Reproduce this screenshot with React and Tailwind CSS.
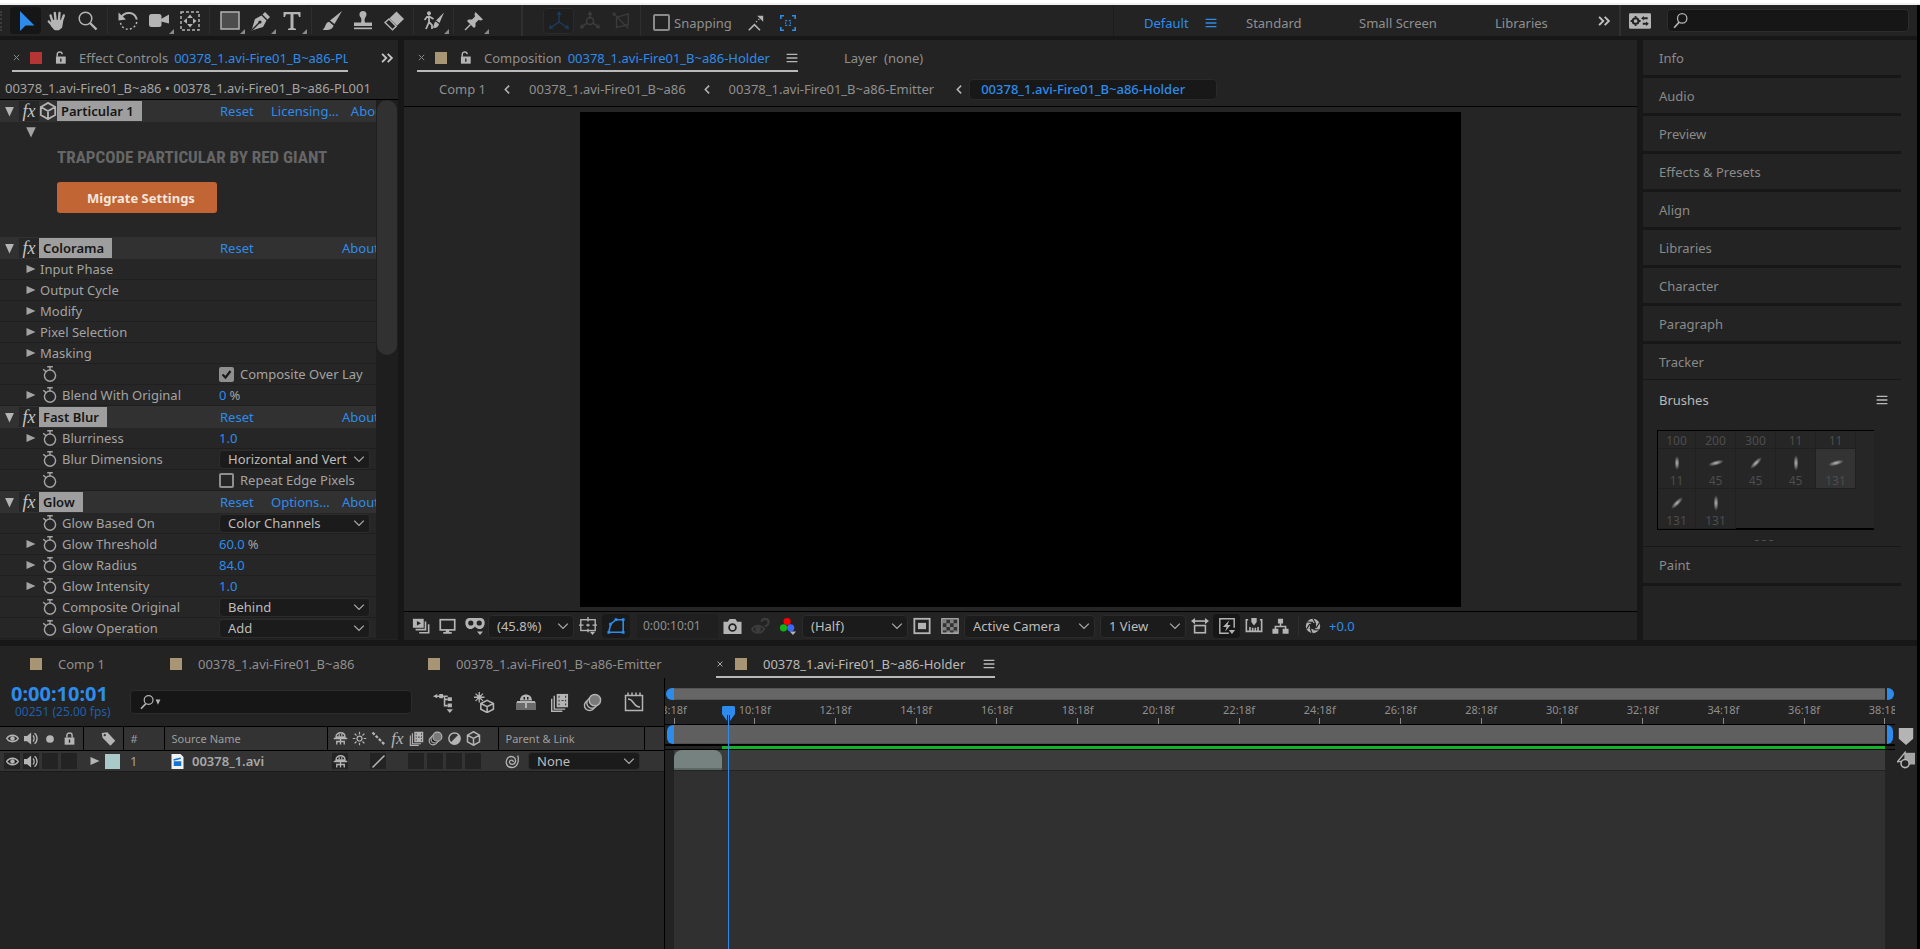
import { useState } from 'react'
import clsx from 'clsx'

// ===== ICONS (all drawn on a 20x20 grid) =====

function Svg({ size = 20, className, children }) {
    return (
        <svg width={size} height={size} viewBox="0 0 20 20" fill="currentColor" className={clsx('shrink-0', className)} aria-hidden="true">
            {children}
        </svg>
    )
}

const line = { fill: 'none', stroke: 'currentColor', strokeWidth: 1.5 }

const icons = {
    select: <path d="M4 0 L4 20 L9.5 14.5 L18.500 14.5 Z" />,
    hand: (
        <g fill="none" stroke="currentColor" strokeLinecap="round" strokeWidth="2.400">
            <path d="M5.200 10 L3.600 4.500 M8.500 8.500 L7.800 2 M12 8.500 L12.500 2 M15 9.500 L16.800 4.500 M5.500 14.500 L1.800 10.500" />
            <path d="M5.500 10 H15 L14 16 L11.500 18 H8 L5 14.500 Z" fill="currentColor" strokeLinejoin="round" />
        </g>
    ),
    zoom: (
        <g {...line}>
            <circle cx="7.500" cy="7.500" r="6.300" />
            <path d="M12 12 L18.500 18.500" strokeWidth="2.400" />
        </g>
    ),
    rotate: (
        <g {...line}>
            <path d="M3.500 6 C7 0 17 0.500 18.800 8.500" strokeWidth="2" />
            <path d="M18.800 11 C17 20 4 21 2.500 11.500" strokeDasharray="2 2.200" />
            <path d="M0.500 1.500 V9.500 L8 8.500 Z" fill="currentColor" stroke="none" />
        </g>
    ),
    camera: (
        <g>
            <rect x="0" y="3" width="12.500" height="13" rx="2.500" />
            <path d="M12 8 L20 3.500 V12.500 L12 10.500 Z" />
        </g>
    ),
    panBehind: (
        <g>
            <rect x="1" y="1" width="18" height="18" {...line} strokeDasharray="3 2" />
            <path d="M10 3.500 L12.800 7 H7.200 Z M10 16.500 L12.800 13 H7.200 Z M3.500 10 L7 7.200 V12.800 Z M16.500 10 L13 7.200 V12.800 Z" />
        </g>
    ),
    rect: <rect x="1" y="1" width="18" height="17" fill="#4d4d4d" stroke="currentColor" strokeWidth="1.500" />,
    pen: (
        <g>
            <path d="M0.500 19.500 L4 8 L10.500 4.500 L15.500 9.500 L12 16 Z" />
            <path d="M11.500 3.500 L14 1 L19 6 L16.500 8.500 Z" />
            <path d="M1 19 L8.500 11.500" stroke="#232323" strokeWidth="1.300" />
            <circle cx="9" cy="11" r="1.600" fill="#232323" />
        </g>
    ),
    type: <path d="M1.500 1 H18.500 V6 H17 L16 3.200 H11.500 V17 L14 17.800 V19 H6 V17.800 L8.500 17 V3.200 H4 L3 6 H1.500 Z" />,
    brush: (
        <g>
            <path d="M20 0 L12.500 13 L8 9.500 Z" />
            <path d="M7 10.800 L11.500 14.500 C11 18.500 5 20 0.500 18.500 C4 17 3 11.500 7 10.800 Z" />
        </g>
    ),
    stamp: (
        <g>
            <path d="M10 0 C14 0 14.500 4 12 7 C11.300 8.500 11.600 10 12 11.500 H19 V15 H1 V11.500 H8 C8.400 10 8.700 8.500 8 7 C5.500 4 6 0 10 0 Z" />
            <rect x="1" y="16.500" width="18" height="1.700" />
        </g>
    ),
    eraser: (
        <g>
            <path d="M12.500 0.500 L20 8 L13 14.800 L5.500 7.300 Z" />
            <path d="M5 8 L12.200 15.200 L8.500 18.800 L1 11.500 Z" {...line} />
        </g>
    ),
    roto: (
        <g>
            <circle cx="5" cy="2.300" r="2" />
            <path d="M5 4.500 V11 L2 18 M5 11 L8 14 V18 M0.500 9 L3 6 H6 L9.500 8" {...line} strokeWidth="1.800" />
            <path d="M20 1.500 L15.500 12 L12 9.500 Z" />
            <path d="M11.500 10.500 L15 13 C14.500 17 10.500 17.500 8.500 16.500 C10.500 15 9.500 12 11.500 10.500 Z" />
        </g>
    ),
    pin: (
        <g>
            <path d="M11.500 1 L19 8.500 L17 9.500 L14.500 9 L11.500 12 L11.500 15.500 L10 17 L3 10 L4.500 8.500 H8 L11 5.500 L10.500 3 Z" />
            <path d="M6.500 13.500 L1 19" {...line} />
        </g>
    ),
    axisLocal: (
        <g {...line}>
            <path d="M10 1 V11 L1 17 M10 11 L19 17" />
            <path d="M10 0 L12.500 4 H7.500 Z M0 18 L1 13.500 L4.500 17.500 Z M20 18 L19 13.500 L15.500 17.500 Z" fill="currentColor" stroke="none" />
        </g>
    ),
    axisWorld: (
        <g {...line}>
            <circle cx="10" cy="10" r="3.500" />
            <path d="M10 1 V8 M7.500 12 L1 16 M12.500 12 L19 16" />
            <path d="M10 0 L12.500 4 H7.500 Z M0 17.500 L1 13 L4.500 17 Z M20 17.500 L19 13 L15.500 17 Z" fill="currentColor" stroke="none" />
        </g>
    ),
    axisView: (
        <g {...line}>
            <path d="M5 6 L18 2 V14 L5 17 Z M2 2 L18 18" />
            <path d="M0.500 0.500 L5 1 L1 5 Z" fill="currentColor" stroke="none" />
        </g>
    ),
    snapEdge: (
        <g {...line}>
            <path d="M1 19 L8 12 L15 19" strokeWidth="2" />
            <path d="M10 9 L15 4" strokeDasharray="2 2" />
            <path d="M11.500 1 H19 V8.500 Z" fill="currentColor" stroke="none" />
        </g>
    ),
    snapBox: (
        <g {...line} strokeWidth="2">
            <path d="M1 5 V1 H5 M15 1 H19 V5 M19 15 V19 H15 M5 19 H1 V15" />
            <path d="M6.500 7 H9 M11 7 H13.500 M6.500 13 H9 M11 13 H13.500 M7 9 V11 M13 9 V11" strokeWidth="1.500" />
        </g>
    ),
    chevrons: <path d="M3 4 L9 10 L3 16 M11 4 L17 10 L11 16" {...line} strokeWidth="2.600" />,
    search: (
        <g {...line}>
            <circle cx="12" cy="7.500" r="5.500" />
            <path d="M8.500 12 L2.500 18.500" strokeWidth="2" />
        </g>
    ),
    menu: <path d="M1 4 H19 M1 10 H19 M1 16 H19" {...line} strokeWidth="2.400" />,
    lockOpen: (
        <g>
            <path d="M5 9 V5 C5 0.500 12.500 0.500 12.500 5" {...line} strokeWidth="2.200" />
            <rect x="3" y="8.500" width="15" height="11" />
            <path d="M9.500 11.500 H11.500 V16.500 H9.500 Z" fill="#232323" />
        </g>
    ),
    lock: (
        <g>
            <path d="M6 9 V5 C6 0.500 14 0.500 14 5 V9" {...line} strokeWidth="2.200" />
            <rect x="2.500" y="8.500" width="15" height="11" />
            <path d="M9 11.500 H11 V16.500 H9 Z" fill="#232323" />
        </g>
    ),
    cube: <path d="M10 1 L18 5.500 V14.500 L10 19 L2 14.500 V5.500 Z M2 5.500 L10 10 L18 5.500 M10 10 V19" {...line} strokeWidth="2" />,
    stopwatch: (
        <g {...line} strokeWidth="1.800">
            <circle cx="10" cy="12" r="7" />
            <path d="M6.500 1 H13.500 M10 1 V5 M1.500 4 L5 7" />
        </g>
    ),
    chevronDown: <path d="M2 6 L10 14 L18 6" {...line} strokeWidth="2.200" />,
    chevronLeft: <path d="M13 3 L6 10 L13 17" {...line} strokeWidth="2.800" />,
    close: <path d="M4 4 L16 16 M16 4 L4 16" {...line} strokeWidth="2.200" />,
    down: <path d="M2 2 H18 L10 19 Z" />,
    right: <path d="M1 2 L19 10 L1 18 Z" />,
    preview: (
        <g>
            <rect x="1" y="2" width="12" height="10" />
            <path d="M5.500 4.500 L10 7 L5.500 9.500 Z" fill="#232323" />
            <path d="M15 5 V14 H4 M18.500 8 V17.500 H8" {...line} strokeWidth="1.800" />
        </g>
    ),
    monitor: (
        <g>
            <rect x="1.500" y="2" width="17" height="12" {...line} strokeWidth="2" />
            <path d="M8 14 H12 V16.500 H15 V18.500 H5 V16.500 H8 Z" />
        </g>
    ),
    goggles: (
        <g>
            <path d="M4 2 H16 C19.500 2 20.500 6.500 19 10 C17 14.500 12 13.500 10 10.500 C8 13.500 3 14.500 1 10 C-0.500 6.500 0.500 2 4 2 Z" />
            <circle cx="5.800" cy="7" r="2.600" fill="#232323" />
            <circle cx="14.200" cy="7" r="2.600" fill="#232323" />
            <path d="M12 15.500 H18 L15 19 Z" />
        </g>
    ),
    region: (
        <g>
            <rect x="2" y="3" width="16" height="12" {...line} />
            <path d="M10 0 V5 M10 7.500 V10.500 M10 13 V17 M0 9 H5 M8 9 H12 M15 9 H20" {...line} />
            <path d="M12 16.500 H18 L15 20 Z" />
        </g>
    ),
    mask: (
        <g {...line}>
            <path d="M2 17 L4 8 L10 3 H18 V17 Z" strokeWidth="1.800" />
            <path d="M0.500 15.500 H3.500 V18.500 H0.500 Z M16.500 15.500 H19.500 V18.500 H16.500 Z M16.500 1.500 H19.500 V4.500 H16.500 Z M8.500 1.500 H11.500 V4.500 H8.500 Z M2.500 6.500 H5.500 V9.500 H2.500 Z" fill="currentColor" stroke="none" />
        </g>
    ),
    photo: (
        <g>
            <path d="M0.500 5 H5 L7 2 H13 L15 5 H19.500 V18 H0.500 Z" />
            <circle cx="10" cy="11" r="3.600" fill="none" stroke="#232323" strokeWidth="1.800" />
        </g>
    ),
    ghost: (
        <g {...line}>
            <path d="M1 13 C4 8 11 8 14 13 C11 18 4 18 1 13 Z" strokeWidth="2" />
            <circle cx="7.500" cy="13" r="2.200" fill="currentColor" />
            <path d="M11 5 C12 1 18 1 18.500 5 C18.500 9 16 10 14.500 9" strokeWidth="2.400" />
        </g>
    ),
    rgb: (
        <g>
            <circle cx="9" cy="5" r="4" fill="#f00" />
            <circle cx="5" cy="12" r="4" fill="#12b312" />
            <circle cx="13" cy="12" r="4" fill="#3a66ff" />
            <path d="M12 16 H19 L15.500 20 Z" />
        </g>
    ),
    safeArea: (
        <g>
            <rect x="1.500" y="2" width="17" height="16" {...line} strokeWidth="2" />
            <rect x="5.500" y="6.500" width="9" height="7" />
        </g>
    ),
    checker: (
        <g>
            <rect x="1" y="2" width="18" height="16" fill="#333" stroke="currentColor" strokeWidth="1.500" />
            <path d="M2 3 H6 V7 H2 Z M10 3 H14 V7 H10 Z M6 7 H10 V11 H6 Z M14 7 H18 V11 H14 Z M2 11 H6 V15 H2 Z M10 11 H14 V15 H10 Z M6 15 H10 V18 H6 Z M14 15 H18 V18 H14 Z" opacity="0.6" />
        </g>
    ),
    pixelAspect: (
        <g {...line} strokeWidth="1.800">
            <rect x="4" y="9.500" width="12" height="8" />
            <path d="M2 4.500 H18" />
            <path d="M0 4.500 L4.500 1 V8 Z M20 4.500 L15.500 1 V8 Z" fill="currentColor" stroke="none" />
        </g>
    ),
    fastPreview: (
        <g>
            <path d="M12 18 H2 V2 H18 V12" {...line} strokeWidth="1.600" />
            <path d="M12.500 3.500 L5.500 11 H9.500 L8 16 L14 9 H10.500 Z" />
            <path d="M12 14.500 H19 L15.500 19 Z" />
        </g>
    ),
    ruler: (
        <g {...line} strokeWidth="1.800">
            <path d="M3.500 3 H1.500 V16 H18.500 V3 H16.500 M5.500 11 V16 M8.500 12 V16 M11.500 12 V16 M14.500 11 V16" />
            <path d="M7 1 H13 V5.500 L10 9.500 L7 5.500 Z" fill="currentColor" stroke="none" />
        </g>
    ),
    flow: (
        <g>
            <path d="M7 1 H13 V6.500 H7 Z M0.500 12.500 H7.500 V18.500 H0.500 Z M12.500 12.500 H19.500 V18.500 H12.500 Z" />
            <path d="M10 6 V10 M4 13 V10 H16 V13" {...line} strokeWidth="1.800" />
        </g>
    ),
    aperture: (
        <g>
            <circle cx="10" cy="10" r="6.500" fill="none" stroke="currentColor" strokeWidth="5" />
            <path d="M10 1 L13.500 7.500 M18 6 L14 12.500 M18 15 L10.500 14.500 M9 19 L6.200 12.500 M2 14 L6 7.500 M2.500 5 L10 5.500" stroke="#232323" strokeWidth="1.500" />
        </g>
    ),
    workspace: (
        <g>
            <rect x="0" y="3" width="20" height="14" rx="1" />
            <circle cx="6" cy="10" r="2.600" fill="none" stroke="#232323" strokeWidth="1.800" />
            <path d="M6 5.500 V7 M6 13 V14.500 M1.500 10 H3 M9 10 H10.500 M13 7.500 H17 M12.500 12.500 H16" stroke="#232323" strokeWidth="1.600" />
            <path d="M13.500 5.500 V9.500 L11 7.500 Z M15.500 10.500 V14.500 L18 12.500 Z" fill="#232323" />
        </g>
    ),
    miniFlow: (
        <g>
            <path d="M0 4 L4 2 V6 Z M6 2 H9.500 V6 H6 Z M14 5 H18 V8.500 H14 Z M14 11 H18 V14.500 H14 Z M13 16.500 H19 L16 20 Z" />
            <path d="M3 4 H14 M11 4 V13 H14 M11 7 H14" {...line} />
        </g>
    ),
    draft3d: (
        <g>
            <path d="M12.500 8 L18.500 11 V16.500 L12.500 19.500 L6.500 16.500 V11 Z M6.500 11 L12.500 14 L18.500 11 M12.500 14 V19.500" {...line} />
            <path d="M5 0 V10 M0 5 H10 M1.500 1.500 L8.500 8.500 M8.500 1.500 L1.500 8.500" {...line} strokeWidth="1.200" />
            <circle cx="5" cy="5" r="2.200" />
        </g>
    ),
    shyAll: (
        <g>
            <rect x="0" y="10" width="20" height="8" opacity="0.5" />
            <path d="M4 8.500 C4 0.500 16 0.500 16 8.500 Z M1 9 H19 V11 H1 Z M9 9 H11 V16 H9 Z" />
            <path d="M7.500 5 H9 V7.500 H7.500 Z M11 5 H12.500 V7.500 H11 Z" fill="#232323" />
        </g>
    ),
    shy: (
        <g>
            <path d="M4 8 C4 0.500 16 0.500 16 8 Z M1 10 H19 M10 9 V18 M5 18 V14 H15 V18" {...line} strokeWidth="1.800" />
            <path d="M7.500 4 H9 V7 H7.500 Z M11 4 H12.500 V7 H11 Z" />
        </g>
    ),
    film: (
        <g>
            <path d="M7 1 H19 V15 H7 Z" />
            <path d="M9 3 H10 V5 H9 Z M9 7 H10 V9 H9 Z M9 11 H10 V13 H9 Z M16 3 H17 V5 H16 Z M16 7 H17 V9 H16 Z M16 11 H17 V13 H16 Z M12 7.500 H14.500 V8.500 H12 Z" fill="#232323" />
            <path d="M4.500 3 V17 H16 M1.800 6 V19.200 H13" {...line} />
        </g>
    ),
    motionBlur: (
        <g {...line}>
            <circle cx="7" cy="13" r="5.500" />
            <circle cx="9.500" cy="10.500" r="5.500" fill="#232323" />
            <circle cx="12.500" cy="7.500" r="6" fill="#7a7a7a" />
        </g>
    ),
    graph: (
        <g {...line}>
            <path d="M1.500 3.500 H18.500 V18.500 H1.500 Z M4 7 C10 7 9 15 16 15" />
            <path d="M4 0.500 V3 M8 0.500 V3 M12 0.500 V3 M16 0.500 V3" />
        </g>
    ),
    eye: (
        <g>
            <path d="M1 10 C5 3.500 15 3.500 19 10 C15 16.500 5 16.500 1 10 Z" {...line} strokeWidth="2.200" />
            <circle cx="10" cy="10" r="3.400" />
        </g>
    ),
    speaker: (
        <g>
            <path d="M0 6.500 H4 L9.500 2 V18 L4 13.500 H0 Z" />
            <path d="M12 6 C14 8 14 12 12 14 M14 3 C18.500 6 18.500 14 14 17" {...line} strokeWidth="1.800" />
        </g>
    ),
    dot: <circle cx="10" cy="10" r="5.500" />,
    tag: (
        <g>
            <path d="M1 2.500 L8.500 1.500 L19 13 L12.500 19.500 L2 9 Z" />
            <circle cx="5" cy="5.500" r="1.500" fill="#333" />
        </g>
    ),
    sun: (
        <g {...line} strokeWidth="1.600">
            <circle cx="10" cy="10" r="3.300" />
            <path d="M10 1 V4.500 M10 15.500 V19 M1 10 H4.500 M15.500 10 H19 M3.500 3.500 L6 6 M14 14 L16.500 16.500 M16.500 3.500 L14 6 M6 14 L3.500 16.500" />
        </g>
    ),
    quality: <path d="M2 2 L18 18" {...line} strokeWidth="3" strokeDasharray="4 2" />,
    slash: <path d="M2 18 L18 2" {...line} strokeWidth="2" />,
    adjustment: (
        <g>
            <circle cx="10" cy="10" r="7.500" {...line} strokeWidth="2" />
            <path d="M15.500 4.500 A7.500 7.500 0 0 1 4.500 15.500 Z" />
        </g>
    ),
    spiral: <path d="M17 2 C19 9 17 18 9 18 C1 18 0 9 4 5 C8 1.500 15 4 14 10 C13 15 6 15 6 10.500 C6 7.500 11 7 11 10.500" {...line} strokeWidth="1.700" />,
    clip: (
        <g>
            <path d="M2 0 H14 L18 4 V20 H2 Z" fill="#f2f2f2" />
            <path d="M5 9.500 H15 V16 H5 Z M4.500 7 L14 4.500 L14.500 6.500 L5 9 Z" fill="#1473d6" />
        </g>
    ),
    shield: <path d="M2 1 H18 V13 L10 20 L2 13 Z" />,
    compButton: (
        <g>
            <path d="M9 2 H20 V15 H9 Z" opacity="0.9" />
            <path d="M0.500 12 L9 1.500 L9 11 Z" fill="#232323" stroke="currentColor" strokeWidth="1.500" />
            <circle cx="9" cy="14" r="4.500" fill="#232323" stroke="currentColor" strokeWidth="1.800" />
        </g>
    ),
}

function Icon({ name, size, className }) {
    return (
        <Svg size={size} className={className}>
            {icons[name]}
        </Svg>
    )
}

// ===== SHARED PARTS =====

function Dropdown({ label, options, className }) {
    return (
        <div className={clsx('relative flex shrink-0 items-center rounded-sm border border-[#2c2c2c] bg-[#1b1b1b]', className)}>
            <select aria-label={label} className="h-full w-full appearance-none bg-transparent pr-5 pl-2 text-[13px] leading-4 text-[#bdbdbd] outline-none">
                {options.map((o) => (
                    <option key={o}>{o}</option>
                ))}
            </select>
            <Icon name="chevronDown" size={12} className="pointer-events-none absolute right-1 text-[#a8a8a8]" />
        </div>
    )
}

function Swatch({ className }) {
    return <span className={clsx('h-3 w-3 shrink-0', className)} />
}

// ===== TOOLBAR =====

const toolGroups = [
    [
        { name: 'select', label: 'Selection Tool', active: true },
        { name: 'hand', label: 'Hand Tool' },
        { name: 'zoom', label: 'Zoom Tool' },
    ],
    [
        { name: 'rotate', label: 'Rotation Tool' },
        { name: 'camera', label: 'Camera Tool', more: true },
        { name: 'panBehind', label: 'Pan Behind Tool' },
    ],
    [
        { name: 'rect', label: 'Rectangle Tool', more: true },
        { name: 'pen', label: 'Pen Tool', more: true },
        { name: 'type', label: 'Type Tool', more: true },
    ],
    [
        { name: 'brush', label: 'Brush Tool' },
        { name: 'stamp', label: 'Clone Stamp Tool' },
        { name: 'eraser', label: 'Eraser Tool' },
    ],
    [{ name: 'roto', label: 'Roto Brush Tool', more: true }],
    [{ name: 'pin', label: 'Puppet Pin Tool', more: true }],
]

function ToolButton({ tool }) {
    return (
        <button
            type="button"
            aria-label={tool.label}
            className={clsx(
                'relative flex h-[27px] w-[31px] items-center justify-center rounded-sm',
                tool.active ? 'bg-[#161616] text-[#2d8ceb]' : 'text-[#b4b4b4]'
            )}
        >
            <Icon name={tool.name} size={20} />
            {tool.more && (
                <svg width="5" height="5" viewBox="0 0 5 5" className="absolute right-0 bottom-0" fill="#8a8a8a">
                    <path d="M5 0 V5 H0 Z" />
                </svg>
            )}
        </button>
    )
}

function Toolbar() {
    const [snapping, setSnapping] = useState(false)

    return (
        <header className="flex h-[31px] items-center bg-[#232323] text-[13px] text-[#8f8f8f]">
            <div className="h-5 w-[6px] shrink-0 border-l-2 border-dotted border-[#3c3c3c]" />
            {toolGroups.map((group, i) => (
                <div key={group[0].name} className={clsx('flex shrink-0 px-1', i > 0 && 'border-l border-[#2e2e2e]')}>
                    {group.map((tool) => (
                        <ToolButton key={tool.name} tool={tool} />
                    ))}
                </div>
            ))}
            <div className="ml-7 flex h-full shrink-0 items-center border-l-2 border-[#303030] pr-1 pl-5 text-[#3c3c3c]">
                <button type="button" aria-label="Local Axis Mode" className="flex h-[26px] w-[31px] items-center justify-center rounded-sm border border-[#2a2a2a] bg-[#1f1f1f] text-[#1c3a5e]">
                    <Icon name="axisLocal" size={20} />
                </button>
                <button type="button" aria-label="World Axis Mode" className="flex w-[31px] justify-center">
                    <Icon name="axisWorld" size={20} />
                </button>
                <button type="button" aria-label="View Axis Mode" className="flex w-[31px] justify-center">
                    <Icon name="axisView" size={18} />
                </button>
            </div>
            <div className="flex h-full shrink-0 items-center border-l border-[#2e2e2e] pt-1 pl-3">
                <label className="flex items-center gap-1">
                    <input
                        type="checkbox"
                        checked={snapping}
                        onChange={(e) => setSnapping(e.target.checked)}
                        className="h-[17px] w-[17px] appearance-none rounded-xs border-2 border-[#8a8a8a]"
                    />
                    Snapping
                </label>
                <button type="button" aria-label="Snap edges" className="ml-4 text-[#b4b4b4]">
                    <Icon name="snapEdge" size={16} />
                </button>
                <button type="button" aria-label="Snap features" className="ml-4 text-[#2d8ceb]">
                    <Icon name="snapBox" size={16} />
                </button>
            </div>
            <nav className="ml-auto flex h-full shrink-0 items-center border-l border-[#1b1b1b] pt-1 pl-[30px]">
                <button type="button" className="flex w-[102px] items-center gap-4 text-[#2d8ceb]">
                    Default
                    <Icon name="menu" size={12} />
                </button>
                <button type="button" className="w-[113px] text-left">Standard</button>
                <button type="button" className="w-[136px] text-left">Small Screen</button>
                <button type="button" className="w-[102px] text-left">Libraries</button>
                <button type="button" aria-label="More workspaces" className="pb-1 text-[#c4c4c4]">
                    <Icon name="chevrons" size={14} />
                </button>
            </nav>
            <div className="ml-2 flex h-full shrink-0 items-center gap-4 border-l-2 border-[#303030] pr-2 pl-1">
                <button type="button" aria-label="Workspace settings" className="pl-1 text-[#b4b4b4]">
                    <Icon name="workspace" size={22} />
                </button>
                <label className="flex h-[23px] w-[242px] items-center gap-2 rounded-sm border border-[#2c2c2c] bg-[#161616] px-1 text-[#b4b4b4]">
                    <Icon name="search" size={17} />
                    <input type="text" aria-label="Search Help" className="w-full bg-transparent outline-none" />
                </label>
            </div>
        </header>
    )
}

// ===== EFFECT CONTROLS =====

const effects = [
    { name: 'Colorama', rows: [
        { group: 'Input Phase' },
        { group: 'Output Cycle' },
        { group: 'Modify' },
        { group: 'Pixel Selection' },
        { group: 'Masking' },
        { check: 'Composite Over Lay', checked: true },
        { label: 'Blend With Original', value: '0', unit: '%' },
    ] },
    { name: 'Fast Blur', rows: [
        { label: 'Blurriness', value: '1.0' },
        { label: 'Blur Dimensions', select: 'Horizontal and Vert' },
        { check: 'Repeat Edge Pixels', checked: false },
    ] },
    { name: 'Glow', link: 'Options...', rows: [
        { label: 'Glow Based On', select: 'Color Channels' },
        { label: 'Glow Threshold', value: '60.0', unit: '%' },
        { label: 'Glow Radius', value: '84.0' },
        { label: 'Glow Intensity', value: '1.0' },
        { label: 'Composite Original', select: 'Behind' },
        { label: 'Glow Operation', select: 'Add' },
    ] },
]

function EffectHeader({ name, link, boxed }) {
    return (
        <div className="flex h-[22px] w-full items-center overflow-hidden bg-[#313131] text-[#2d8ceb]">
            <div className="flex w-[220px] shrink-0 items-center pl-1">
                <Icon name="down" size={11} className="text-[#b4b4b4]" />
                <span className="ml-1 flex h-5 w-5 items-center justify-center bg-[#262626] font-['Liberation_Serif',serif] text-[18px] leading-none text-[#c4c4c4] italic">fx</span>
                {boxed && <Icon name="cube" size={18} className="text-[#b4b4b4]" />}
                <h3 className="h-5 bg-[#9e9e9e] pr-2 pl-1 leading-5 font-semibold text-[#161616]">{name}</h3>
            </div>
            <button type="button" className="w-[51px] shrink-0 text-left">Reset</button>
            {link ? (
                <button type="button" className="min-w-[71px] shrink-0 pr-3 text-left">{link}</button>
            ) : (
                <span className="w-[71px] shrink-0" />
            )}
            <button type="button" className="shrink-0">About</button>
        </div>
    )
}

function EffectRow({ row }) {
    if (row.group) {
        return (
            <div className="flex h-[21px] items-center gap-1 border-b border-[#1f1f1f] pl-[26px]">
                <Icon name="right" size={10} />
                {row.group}
            </div>
        )
    }

    return (
        <div className="flex h-[21px] items-center border-b border-[#1f1f1f]">
            <div className="flex w-[219px] shrink-0 items-center pl-[26px]">
                <span className="flex w-4 shrink-0">{row.value && <Icon name="right" size={10} />}</span>
                <Icon name="stopwatch" size={16} />
                <span className="pl-1">{row.label}</span>
            </div>
            {row.value && (
                <>
                    <button type="button" className="text-[#2d8ceb]">{row.value}</button>
                    <span className="pl-[3px]">{row.unit}</span>
                </>
            )}
            {row.select && <Dropdown label={row.label} options={[row.select]} className="h-[19px] w-[151px]" />}
            {row.check && (
                <label className="flex items-center gap-[6px] whitespace-nowrap">
                    <span className="relative flex">
                        <input
                            type="checkbox"
                            defaultChecked={row.checked}
                            className="h-[15px] w-[15px] appearance-none rounded-xs border-2 border-[#8f8f8f] checked:bg-[#8f8f8f]"
                        />
                        {row.checked && (
                            <svg width="15" height="15" viewBox="0 0 15 15" className="absolute top-0 left-0">
                                <path d="M3.500 7.500 L6.500 10.500 L11.500 4" fill="none" stroke="#1b1b1b" strokeWidth="2.200" />
                            </svg>
                        )}
                    </span>
                    {row.check}
                </label>
            )}
        </div>
    )
}

function EffectControls() {
    return (
        <section className="flex w-[398px] shrink-0 flex-col bg-[#232323] text-[13px] text-[#a3a3a3]">
            <div className="flex h-8 items-stretch justify-between pr-1 pl-3">
                <div className="flex w-[336px] items-center overflow-hidden border-b-2 border-[#b9b9b9] pt-[5px] whitespace-nowrap">
                    <Icon name="close" size={9} className="mr-[9px] text-[#8a8a8a]" />
                    <Swatch className="bg-[#b53535]" />
                    <Icon name="lockOpen" size={13} className="mx-3 text-[#b4b4b4]" />
                    <span className="text-[#8f8f8f]">Effect Controls</span>
                    <span className="pl-[6px] text-[#2d8ceb]">00378_1.avi-Fire01_B~a86-PL001</span>
                </div>
                <button type="button" aria-label="More panels" className="pt-1 text-[#c4c4c4]">
                    <Icon name="chevrons" size={14} />
                </button>
            </div>
            <div className="flex h-7 items-center overflow-hidden border-b border-black pt-1 pl-[5px] whitespace-nowrap">
                00378_1.avi-Fire01_B~a86 • 00378_1.avi-Fire01_B~a86-PL001
            </div>
            <div className="flex">
                <div className="flex w-[376px] flex-col overflow-hidden bg-[#262626]">
                    <EffectHeader name="Particular 1" link="Licensing..." boxed />
                    <div className="flex h-[115px] flex-col items-start">
                        <Icon name="down" size={12} className="mt-1 ml-[25px]" />
                        <div className="flex flex-col items-start gap-[10px] pt-1 pl-[57px]">
                            <p className="font-['Liberation_Sans_Narrow','Roboto_Condensed','Open_Sans_Condensed',Roboto,sans-serif] text-[17px] leading-[30px] font-bold whitespace-nowrap text-[#666]">
                                TRAPCODE PARTICULAR BY RED GIANT
                            </p>
                            <button type="button" className="h-[31px] w-40 rounded-[3px] bg-[#c06533] pl-2 text-[13px] font-bold text-[#f3e6dd]">
                                Migrate Settings
                            </button>
                        </div>
                    </div>
                    {effects.map((fx) => (
                        <div key={fx.name}>
                            <EffectHeader name={fx.name} link={fx.link} />
                            {fx.rows.map((row) => (
                                <EffectRow key={row.group || row.label || row.check} row={row} />
                            ))}
                        </div>
                    ))}
                </div>
                <div className="flex-1 bg-[#1e1e1e] px-px">
                    <div className="h-[255px] rounded-full bg-[#313131]" />
                </div>
            </div>
        </section>
    )
}

// ===== COMPOSITION VIEWER =====

function Slot({ name, label, size = 18, className = 'w-7' }) {
    return (
        <button type="button" aria-label={label} className={clsx('flex h-6 shrink-0 items-center justify-center', className)}>
            <Icon name={name} size={size} />
        </button>
    )
}

function Composition() {
    return (
        <section className="flex min-w-0 flex-1 flex-col bg-[#232323] text-[13px] text-[#8f8f8f]">
            <div className="flex h-8 items-stretch pl-[13px] whitespace-nowrap">
                <div className="flex items-center border-b-2 border-[#b9b9b9] pt-[5px]">
                    <Icon name="close" size={9} className="mr-[9px] text-[#8a8a8a]" />
                    <Swatch className="bg-[#a89574]" />
                    <Icon name="lockOpen" size={13} className="mx-3 text-[#b4b4b4]" />
                    <span>Composition</span>
                    <span className="pr-4 pl-[6px] text-[#2d8ceb]">00378_1.avi-Fire01_B~a86-Holder</span>
                    <Icon name="menu" size={12} className="text-[#b4b4b4]" />
                </div>
                <button type="button" className="ml-[46px] pt-1 whitespace-pre">{'Layer  (none)'}</button>
            </div>
            <nav className="flex h-[35px] items-center gap-4 border-b border-black pl-[35px] whitespace-nowrap">
                <a href="#comp1">Comp 1</a>
                <Icon name="chevronLeft" size={11} className="text-[#b4b4b4]" />
                <a href="#a86">00378_1.avi-Fire01_B~a86</a>
                <Icon name="chevronLeft" size={11} className="text-[#b4b4b4]" />
                <a href="#emitter">00378_1.avi-Fire01_B~a86-Emitter</a>
                <div className="flex items-center gap-1 pl-1">
                    <Icon name="chevronLeft" size={11} className="text-[#b4b4b4]" />
                    <a href="#holder" className="flex h-[21px] w-[248px] items-center rounded-sm border border-[#2a2a2a] bg-[#181818] pl-[11px] font-medium text-[#2d8ceb]">
                        00378_1.avi-Fire01_B~a86-Holder
                    </a>
                </div>
            </nav>
            <div className="flex flex-1 items-center justify-center bg-[#252525] pt-[5px] pb-1">
                <div className="aspect-video w-5/7 bg-black" />
            </div>
            <div className="flex h-[29px] items-center border-t border-black pl-[3px] text-[#b4b4b4]">
                <Slot name="preview" label="Always Preview" className="w-[27px]" />
                <Slot name="monitor" label="Primary Viewer" size={17} className="w-[27px]" />
                <Slot name="goggles" label="3D Goggles" size={20} className="w-[27px]" />
                <Dropdown label="Magnification" options={['(45.8%)']} className="h-[23px] w-[86px]" />
                <Slot name="region" label="Grid and guides" />
                <Slot name="mask" label="Toggle Mask" className="w-7 rounded-sm bg-[#1a1a1a] text-[#2d8ceb]" />
                <button type="button" className="ml-[7px] h-6 w-[81px] shrink-0 bg-[#1f1f1f] pl-[6px] text-left text-[12px] text-[#8f8f8f]">0:00:10:01</button>
                <Slot name="photo" label="Take Snapshot" size={19} />
                <Slot name="ghost" label="Show Snapshot" size={19} className="w-7 text-[#3c3c3c]" />
                <Slot name="rgb" label="Show Channel" />
                <Dropdown label="Resolution" options={['(Half)']} className="h-[23px] w-[106px]" />
                <Slot name="safeArea" label="Region of Interest" />
                <Slot name="checker" label="Transparency Grid" />
                <Dropdown label="3D View" options={['Active Camera']} className="mr-[5px] h-[23px] w-[131px]" />
                <Dropdown label="View Layout" options={['1 View']} className="h-[23px] w-[86px]" />
                <Slot name="pixelAspect" label="Pixel Aspect Ratio" className="w-[27px]" />
                <Slot name="fastPreview" label="Fast Previews" className="w-[27px] rounded-sm bg-[#161616]" />
                <Slot name="ruler" label="Timeline" className="w-[27px]" />
                <Slot name="flow" label="Flowchart" size={17} className="w-[27px]" />
                <div className="ml-1 flex items-center gap-2 border-l border-[#2e2e2e] pl-[6px]">
                    <Icon name="aperture" size={16} />
                    <button type="button" className="text-[#2d8ceb]">+0.0</button>
                </div>
            </div>
        </section>
    )
}

// ===== RIGHT PANEL STACK =====

const panels = ['Info', 'Audio', 'Preview', 'Effects & Presets', 'Align', 'Libraries', 'Character', 'Paragraph', 'Tracker']

const brushes = [
    { size: 11, angle: 90, w: 7 },
    { size: 45, angle: -15, w: 8 },
    { size: 45, angle: -45, w: 8 },
    { size: 45, angle: 90, w: 8 },
    { size: 131, angle: -15, w: 8, active: true },
    { size: 131, angle: -45, w: 8 },
    { size: 131, angle: 90, w: 8 },
]

function BrushesPanel() {
    return (
        <div className="mr-4 border-b border-[#171717]">
            <div className="flex h-10 items-center justify-between pr-[13px] pl-4 text-[#b9b9b9]">
                <h2>Brushes</h2>
                <Icon name="menu" size={12} />
            </div>
            <div className="mt-[10px] mr-[27px] ml-[14px] h-[100px] border-t border-b-2 border-l border-black bg-[#262626] text-[12px] text-[#4d4d4d]">
                <div className="grid grid-cols-[38px_repeat(4,40px)]">
                    {['100', '200', '300', '11', '11'].map((n, i) => (
                        <button key={i} type="button" className="h-[18px] border-r border-b border-[#202020] leading-[20px]">{n}</button>
                    ))}
                    {brushes.map((b, i) => (
                        <button
                            key={i}
                            type="button"
                            className={clsx('flex h-10 flex-col items-center justify-end border-r border-b border-[#202020] leading-[15px]', b.active && 'bg-[#333]')}
                        >
                            <svg width="20" height="20" viewBox="-10 -10 20 20">
                                <defs>
                                    <radialGradient id={`tip${i}`}>
                                        <stop offset="0" stopColor="#bbb" />
                                        <stop offset="1" stopColor="#bbb" stopOpacity="0" />
                                    </radialGradient>
                                </defs>
                                <ellipse rx={b.w} ry="2.600" fill={`url(#tip${i})`} transform={`rotate(${b.angle})`} />
                            </svg>
                            {b.size}
                        </button>
                    ))}
                </div>
            </div>
            <div className="flex h-4 items-center justify-center gap-[3px] pt-1 pr-4">
                <span className="h-px w-1 bg-[#4d4d4d]" />
                <span className="h-px w-1 bg-[#4d4d4d]" />
                <span className="h-px w-1 bg-[#4d4d4d]" />
            </div>
        </div>
    )
}

function PanelStack() {
    return (
        <aside className="w-[274px] shrink-0 bg-[#232323] text-[13px] text-[#8a8a8a]">
            {panels.map((name, i) => (
                <button
                    key={name}
                    type="button"
                    className={clsx(
                        'mr-4 flex w-[258px] items-center border-[#171717] pl-4 text-left',
                        i === panels.length - 1 ? 'h-9 border-b' : 'h-[38px] border-b-3'
                    )}
                >
                    {name}
                </button>
            ))}
            <BrushesPanel />
            <button type="button" className="flex h-[39px] w-[258px] items-center border-b-3 border-[#171717] pl-4">Paint</button>
        </aside>
    )
}

// ===== TIMELINE =====

const ticks = Array.from({ length: 16 }, (_, i) => `${8 + i * 2}:18f`)

const timeline = { playhead: 4.5, clipEnd: 4 }

function TimelineTabs() {
    return (
        <div className="flex h-8 items-stretch pl-[30px] text-[13px] whitespace-nowrap text-[#8f8f8f]">
            <button type="button" className="flex w-[140px] items-center gap-4 pt-1">
                <Swatch className="bg-[#a89574]" />
                Comp 1
            </button>
            <button type="button" className="flex w-[258px] items-center gap-4 pt-1">
                <Swatch className="bg-[#a89574]" />
                00378_1.avi-Fire01_B~a86
            </button>
            <button type="button" className="flex w-[288px] items-center gap-4 pt-1">
                <Swatch className="bg-[#a89574]" />
                00378_1.avi-Fire01_B~a86-Emitter
            </button>
            <div className="flex items-center border-b-2 border-[#b9b9b9] pt-[5px] text-[#b9b9b9]">
                <Icon name="close" size={8} className="mr-[11px]" />
                <Swatch className="mr-4 bg-[#a89574]" />
                00378_1.avi-Fire01_B~a86-Holder
                <Icon name="menu" size={12} className="ml-[18px]" />
            </div>
        </div>
    )
}

const switches = ['shy', 'sun', 'quality', 'fx', 'film', 'motionBlur', 'adjustment', 'cube']

function LayerTable() {
    const cell = 'flex h-4 w-4 items-center justify-center'

    return (
        <table className="w-full table-fixed border-collapse text-[#b4b4b4]">
            <colgroup>
                <col className="w-[83px]" />
                <col className="w-10" />
                <col className="w-[41px]" />
                <col className="w-[163px]" />
                <col className="w-[171px]" />
                <col className="w-[146px]" />
                <col />
            </colgroup>
            <thead>
                <tr className="h-6 border-y border-black bg-[#333] text-left text-[11px] text-[#9e9e9e]">
                    <th className="border-r border-black">
                        <div className="flex gap-[3px] pl-1 text-[#b4b4b4]">
                            <span className={cell}><Icon name="eye" size={13} /></span>
                            <span className={cell}><Icon name="speaker" size={15} /></span>
                            <span className={cell}><Icon name="dot" size={14} /></span>
                            <span className={cell}><Icon name="lock" size={13} /></span>
                        </div>
                    </th>
                    <th className="border-r border-black">
                        <Icon name="tag" size={15} className="ml-[17px] text-[#b4b4b4]" />
                    </th>
                    <th className="border-r border-black pl-[7px] font-normal">#</th>
                    <th className="border-r border-black pl-[7px] font-normal">Source Name</th>
                    <th className="border-r border-black">
                        <div className="flex gap-[3px] pl-[5px] text-[#b4b4b4]">
                            {switches.map((s) => (
                                <span key={s} className={cell}>
                                    {s === 'fx' ? (
                                        <span className="font-['Liberation_Serif',serif] text-[17px] leading-none font-normal italic">fx</span>
                                    ) : (
                                        <Icon name={s} size={15} />
                                    )}
                                </span>
                            ))}
                        </div>
                    </th>
                    <th className="border-r border-black pl-[7px] font-normal">Parent &amp; Link</th>
                    <th />
                </tr>
            </thead>
            <tbody>
                <tr className="h-[21px] border-b border-[#1b1b1b] bg-[#333] text-[13px]">
                    <td>
                        <div className="flex gap-[3px] pl-1">
                            <span className={clsx(cell, 'bg-[#232323]')}><Icon name="eye" size={13} /></span>
                            <span className={clsx(cell, 'bg-[#232323]')}><Icon name="speaker" size={15} /></span>
                            <span className={clsx(cell, 'bg-[#232323]')} />
                            <span className={clsx(cell, 'bg-[#232323]')} />
                        </div>
                    </td>
                    <td>
                        <div className="flex items-center gap-[5px] pl-[7px]">
                            <Icon name="right" size={10} />
                            <span className="h-[15px] w-[15px] bg-[#a9cac9]" />
                        </div>
                    </td>
                    <td className="pl-[7px] leading-4 text-[#a3a3a3]">1</td>
                    <td>
                        <div className="flex h-4 items-center gap-[7px] pl-[6px] leading-4 font-semibold text-[#a8a8a8]">
                            <Icon name="clip" size={15} />
                            00378_1.avi
                        </div>
                    </td>
                    <td>
                        <div className="flex gap-[3px] pl-[5px]">
                            {switches.map((s) => (
                                <span key={s} className={clsx(cell, s !== 'sun' && s !== 'fx' && 'bg-[#232323]')}>
                                    {s === 'shy' && <Icon name="shy" size={15} />}
                                    {s === 'quality' && <Icon name="slash" size={15} />}
                                </span>
                            ))}
                        </div>
                    </td>
                    <td>
                        <div className="flex items-center gap-2 pl-[7px]">
                            <Icon name="spiral" size={15} />
                            <Dropdown label="Parent" options={['None']} className="h-[18px] w-[112px]" />
                        </div>
                    </td>
                    <td />
                </tr>
            </tbody>
        </table>
    )
}

function TimeRuler() {
    return (
        <div className="relative flex min-w-0 flex-1 flex-col">
            <div className="mt-[10px] flex h-3 pr-px pl-px">
                <span className="w-2 rounded-l-full bg-[#2d8ceb]" />
                <span className="flex-1 border-y border-[#555] bg-[#666]" />
                <span className="ml-[2px] w-[7px] rounded-r-full bg-[#2d8ceb]" />
            </div>
            <div className="flex h-[25px] justify-between overflow-hidden border-b border-black pr-[10px] pl-[9px] text-[11px] text-[#8f8f8f]">
                {ticks.map((t) => (
                    <div key={t} className="flex w-0 flex-col items-center justify-end whitespace-nowrap">
                        <span className="leading-4">{t}</span>
                        <span className="h-[6px] w-px bg-[#8a8a8a]" />
                    </div>
                ))}
            </div>
            <div className="flex h-[19px] pr-[2px] pl-[2px]">
                <span className="w-[7px] rounded-l-md bg-[#2d8ceb]" />
                <span className="flex-1 border-b border-[#505050] bg-[#5f5f5f]" />
                <span className="ml-[2px] w-[6px] rounded-r-md bg-[#2d8ceb]" />
            </div>
            <div className="flex h-[6px] items-stretch border-t-2 border-b border-black pr-[10px] pl-[9px]">
                <span style={{ width: `${timeline.clipEnd}%` }} />
                <span className="flex-1 bg-[#14b428]" />
            </div>
            <div className="flex flex-1 flex-col pr-[10px] pl-[9px]">
                <div className="flex h-[21px] border-b border-[#232323] bg-[#3c3c3c]">
                    <span className="rounded-t-lg border-b-2 border-[#5c6866] bg-[#75827f]" style={{ width: `${timeline.clipEnd}%` }} />
                </div>
                <div className="flex-1 bg-[#303030]" />
            </div>
            {/* current time indicator */}
            <div className="pointer-events-none absolute inset-y-0 right-[10px] left-[9px]">
                <div className="absolute top-[28px] bottom-0 flex w-0 flex-col items-center" style={{ left: `${timeline.playhead}%` }}>
                    <svg width="13" height="16" viewBox="0 0 13 16" className="shrink-0" fill="#2d8ceb">
                        <path d="M1 0 H12 L13 1 V8 L8 15 V9 H5 V15 L0 8 V1 Z" />
                        <path d="M6 9 H7 V16 H6 Z" />
                    </svg>
                    <span className="w-px flex-1 bg-[#2d8ceb]" />
                </div>
            </div>
        </div>
    )
}

function Timeline() {
    return (
        <section className="flex flex-1 flex-col bg-[#232323]">
            <TimelineTabs />
            <div className="flex flex-1">
                <div className="w-[665px] shrink-0 border-r border-black">
                    <div className="flex h-12 items-center">
                        <div className="w-[130px] shrink-0 pl-[11px] text-[#2d8ceb]">
                            <p className="text-[20px] leading-5 font-bold">0:00:10:01</p>
                            <p className="pl-1 text-[12px] leading-4 text-[#1f5fa6]">00251 (25.00 fps)</p>
                        </div>
                        <label className="flex h-6 w-[282px] shrink-0 items-center rounded-sm border border-[#2c2c2c] bg-[#161616] px-2 text-[#b4b4b4]">
                            <Icon name="search" size={16} />
                            <Icon name="down" size={6} />
                            <input type="text" aria-label="Search layers" className="w-full bg-transparent pl-1 outline-none" />
                        </label>
                        <div className="flex pl-5 text-[#b4b4b4]">
                            <Slot name="miniFlow" label="Mini-Flowchart" size={21} className="w-[22px]" />
                            <Slot name="draft3d" label="Draft 3D" size={21} className="w-[60px]" />
                            <Slot name="shyAll" label="Hide Shy Layers" size={20} className="w-[24px]" />
                            <Slot name="film" label="Frame Blending" size={19} className="w-[42px]" />
                            <Slot name="motionBlur" label="Motion Blur" size={19} className="w-[24px]" />
                            <Slot name="graph" label="Graph Editor" size={20} className="w-[60px]" />
                        </div>
                    </div>
                    <LayerTable />
                </div>
                <TimeRuler />
                <div className="flex w-[22px] shrink-0 flex-col items-center gap-[6px] pt-[49px] text-[#b4b4b4]">
                    <Icon name="shield" size={18} />
                    <Icon name="compButton" size={18} />
                </div>
            </div>
        </section>
    )
}

function App() {
    return (
        <div className="flex min-h-screen flex-col bg-black font-['Noto_Sans',sans-serif] leading-5">
            <div className="h-[5px] border-b-2 border-[#f0f0f0] bg-white" />
            <main className="mr-[3px] flex flex-1 flex-col bg-[#171717]">
                <Toolbar />
                <div className="flex gap-[6px] pt-1 pb-[6px]">
                    <EffectControls />
                    <Composition />
                    <PanelStack />
                </div>
                <Timeline />
            </main>
        </div>
    )
}

export default App
